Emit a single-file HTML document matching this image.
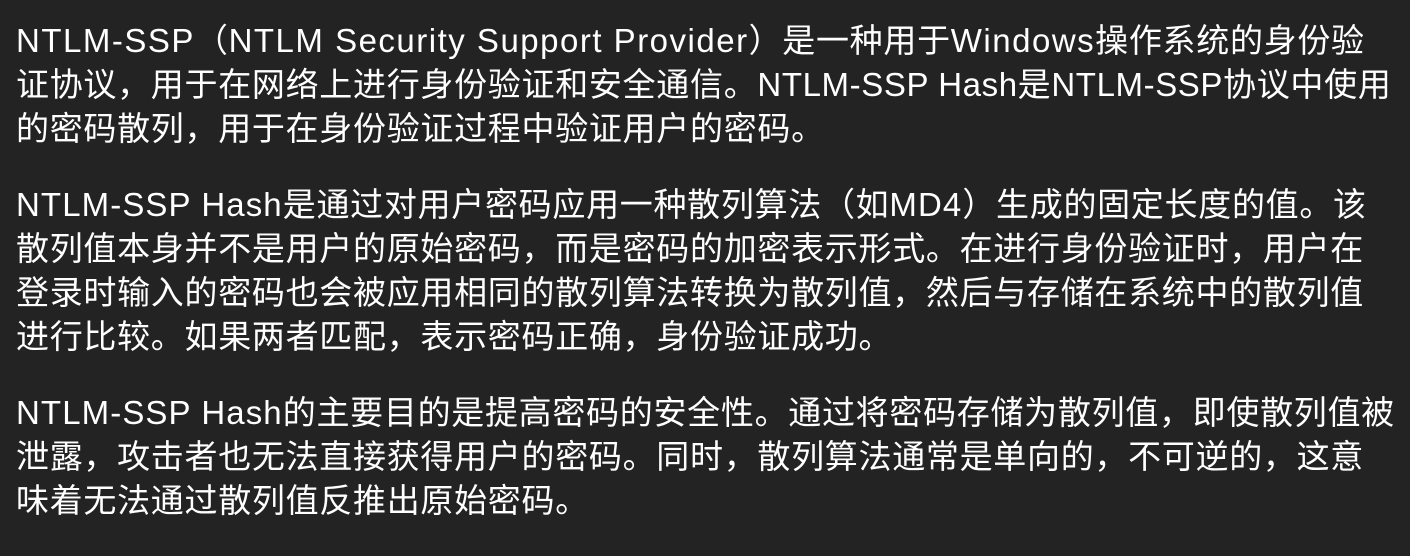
<!DOCTYPE html>
<html><head><meta charset="utf-8"><style>
html,body{margin:0;padding:0;background:#232323;width:1410px;height:556px;overflow:hidden}
body{color:#fff;font-family:"Liberation Sans","Noto Sans CJK SC",sans-serif;font-size:33px;line-height:44px;letter-spacing:0.7px}
.w{position:absolute;left:16px;top:19px;white-space:nowrap}
p{margin:0 0 32px 0}
i{font-style:normal;letter-spacing:1.1px}
i.a{letter-spacing:1.5px}
i.b{letter-spacing:0.6px}
</style></head><body><div class="w">
<p><i class="a">NTLM-SSP</i>（<i class="a">NTLM Security Support Provider</i>）是一种用于<i class="a">Windows</i>操作系统的身份验<br>证协议，用于在网络上进行身份验证和安全通信。<i class="b">NTLM-SSP Hash</i>是<i class="b">NTLM-SSP</i>协议中使用<br>的密码散列，用于在身份验证过程中验证用户的密码。</p>
<p><i>NTLM-SSP Hash</i>是通过对用户密码应用一种散列算法（如<i>MD4</i>）生成的固定长度的值。该<br>散列值本身并不是用户的原始密码，而是密码的加密表示形式。在进行身份验证时，用户在<br>登录时输入的密码也会被应用相同的散列算法转换为散列值，然后与存储在系统中的散列值<br>进行比较。如果两者匹配，表示密码正确，身份验证成功。</p>
<p><i>NTLM-SSP Hash</i>的主要目的是提高密码的安全性。通过将密码存储为散列值，即使散列值被<br>泄露，攻击者也无法直接获得用户的密码。同时，散列算法通常是单向的，不可逆的，这意<br>味着无法通过散列值反推出原始密码。</p>
</div></body></html>
